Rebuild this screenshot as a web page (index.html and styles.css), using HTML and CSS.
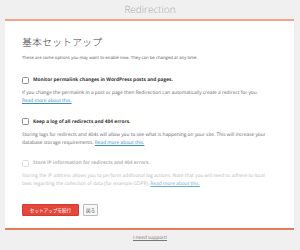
FILE: index.html
```html
<!DOCTYPE html>
<html lang="ja">
<head>
<meta charset="utf-8">
<title>Redirection</title>
<link rel="stylesheet" href="styles.css">
</head>
<body>
<header class="brand">Redirection</header>
<main class="card">
  <h1 class="title">基本セットアップ</h1>
  <p class="intro">These are some options you may want to enable now. They can be changed at any time.</p>

  <div class="option">
    <label class="opt-label"><span class="box"></span>Monitor permalink changes in WordPress posts and pages.</label>
    <p class="desc">If you change the permalink in a post or page then Redirection can automatically create a redirect for you. <a href="#" class="more">Read more about this.</a></p>
  </div>

  <div class="option">
    <label class="opt-label"><span class="box"></span>Keep a log of all redirects and 404 errors.</label>
    <p class="desc">Storing logs for redirects and 404s will allow you to see what is happening on your site. This will increase your database storage requirements. <a href="#" class="more">Read more about this.</a></p>
  </div>

  <div class="option disabled">
    <label class="opt-label"><span class="box"></span>Store IP information for redirects and 404 errors.</label>
    <p class="desc">Storing the IP address allows you to perform additional log actions. Note that you will need to adhere to local laws regarding the collection of data (for example GDPR). <a href="#" class="more">Read more about this.</a></p>
  </div>

  <div class="actions">
    <button class="btn btn-primary">セットアップを続行</button>
    <button class="btn btn-secondary">戻る</button>
  </div>
</main>
<footer class="support"><a href="#">I need support!</a></footer>
</body>
</html>
```

FILE: styles.css
```css
html, body {
  margin: 0;
  padding: 0;
}
body {
  background: #f0f0f0;
  font-family: "Open Sans", "Noto Sans CJK JP", sans-serif;
  text-rendering: geometricPrecision;
  width: 300px;
  height: 250px;
  overflow: hidden;
}
.brand {
  height: 19px;
  line-height: 18px;
  text-align: center;
  font-size: 10px;
  font-weight: 300;
  color: #a9a9a9;
}
.card {
  margin: 0 6px 0 5px;
  background: #fff;
  border-top: 2px solid #f2a489;
  border-bottom: 2px solid #e8795c;
  padding: 15px 25px 12px 17px;
}
.title {
  margin: 0;
  font-family: "Noto Sans CJK JP", sans-serif;
  font-size: 10px;
  line-height: 12px;
  font-weight: 300;
  color: #444;
}
.intro {
  margin: 6px 0 0;
  font-size: 4.3px;
  line-height: 8px;
  color: #555;
}
.option {
  margin-top: 14px;
}
.option + .option {
  margin-top: 12px;
}
.opt-label {
  display: flex;
  align-items: center;
  gap: 4px;
  height: 8px;
  font-size: 4.8px;
  font-weight: 700;
  color: #333;
  white-space: nowrap;
}
.box {
  flex: none;
  width: 5px;
  height: 5px;
  border: 0.7px solid #8c8f94;
  border-radius: 1.5px;
  background: #fff;
}
.desc {
  margin: 5px 0 0;
  font-size: 4.8px;
  line-height: 8.3px;
  color: #666;
}
.more {
  color: #3a8cc4;
  text-decoration: underline;
}
.disabled .opt-label {
  color: #b5b5b5;
}
.disabled .box {
  border-color: #dcdcdc;
}
.disabled .desc {
  color: #b8b8b8;
}
.disabled .more {
  color: #6aaad6;
}
.actions {
  display: flex;
  gap: 4px;
  margin-top: 15px;
}
.btn {
  height: 12px;
  margin: 0;
  font-family: "Noto Sans CJK JP", sans-serif;
  font-size: 4.6px;
  line-height: 10px;
  border-radius: 1px;
  cursor: pointer;
}
.btn-primary {
  padding: 0 6px;
  width: 57px;
  background: #e2473c;
  border: 1px solid #d5392f;
  color: #fff;
}
.btn-secondary {
  width: 15px;
  padding: 0;
  background: #f7f7f7;
  border: 1px solid #bbb;
  color: #555;
}
.support {
  text-align: center;
  font-size: 4.8px;
  line-height: 16px;
}
.support a {
  color: #777;
  text-decoration: underline;
}
```
